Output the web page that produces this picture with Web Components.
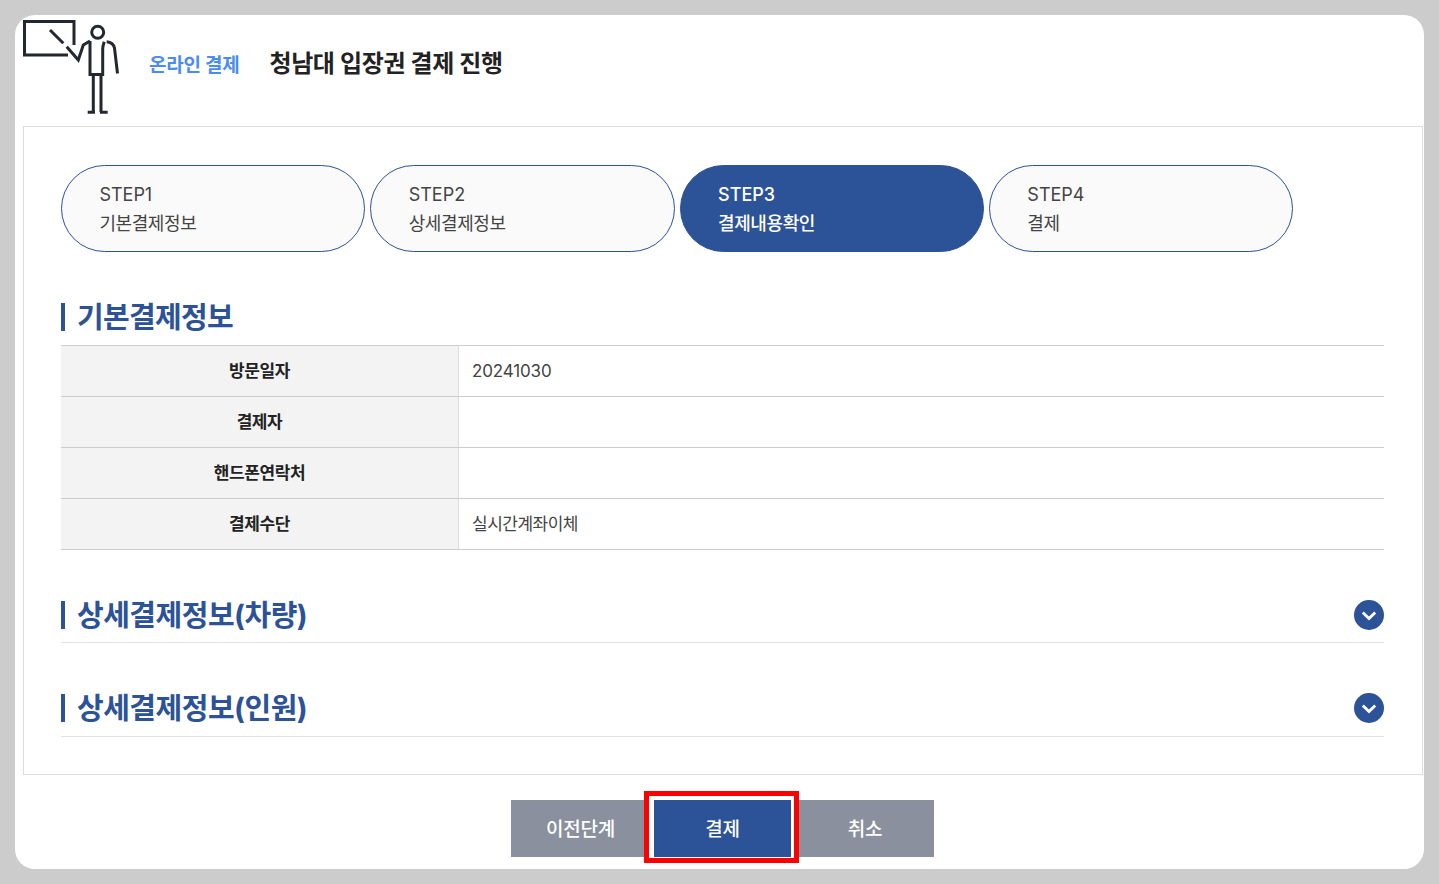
<!DOCTYPE html>
<html lang="ko">
<head>
<meta charset="utf-8">
<title>온라인 결제</title>
<style>
  html, body { margin: 0; height: 100%; }
  body {
    background: #cccccc;
    font-family: Inter, "Noto Sans CJK KR", sans-serif;
    color: #333;
    overflow: hidden;
  }
</style>
</head>
<body>
<payment-page>
  <page-header slot="header"></page-header>
  <step-nav slot="steps">
    <step-pill step="STEP1" label="기본결제정보"></step-pill>
    <step-pill step="STEP2" label="상세결제정보"></step-pill>
    <step-pill step="STEP3" label="결제내용확인" active></step-pill>
    <step-pill step="STEP4" label="결제"></step-pill>
  </step-nav>
  <section-title slot="sections">기본결제정보</section-title>
  <info-table slot="sections">
    <info-row label="방문일자">20241030</info-row>
    <info-row label="결제자"></info-row>
    <info-row label="핸드폰연락처"></info-row>
    <info-row label="결제수단" style="--value-spacing:-0.5px;--value-lift:4px">실시간계좌이체</info-row>
  </info-table>
  <fold-section slot="sections" style="margin-top:34px">상세결제정보(차량)</fold-section>
  <fold-section slot="sections" style="margin-top:34px;height:60px;padding-bottom:1px">상세결제정보(인원)</fold-section>
  <action-bar slot="actions">
    <action-button>이전단계</action-button>
    <action-button primary highlight>결제</action-button>
    <action-button>취소</action-button>
  </action-bar>
</payment-page>

<script>
class PaymentPage extends HTMLElement {
    constructor() {
        super();
        this.attachShadow({ mode: 'open' });
        this.shadowRoot.innerHTML = `
            <style>
                :host {
                    display: block;
                    position: absolute;
                    left: 15px;
                    top: 15px;
                    width: 1409px;
                    height: 854px;
                    background: #fff;
                    border-radius: 20px;
                    overflow: hidden;
                }
                .body {
                    box-sizing: border-box;
                    margin-left: 8px;
                    width: 1400px;
                    height: 649px;
                    border: 1px solid #dddddd;
                    padding: 38px 38px 0 37px;
                }
                .sections { display: block; margin-top: 40px; }
            </style>
            <slot name="header"></slot>
            <div class="body">
                <slot name="steps"></slot>
                <div class="sections"><slot name="sections"></slot></div>
            </div>
            <slot name="actions"></slot>
        `;
    }
}

class PageHeader extends HTMLElement {
    constructor() {
        super();
        this.attachShadow({ mode: 'open' });
        this.shadowRoot.innerHTML = `
            <style>
                :host {
                    display: flex;
                    align-items: flex-start;
                    height: 111px;
                    padding-left: 8px;
                    box-sizing: border-box;
                }
                svg { display: block; flex: none; margin-top: 4px; }
                .sub {
                    margin: 38px 0 0 29px;
                    font-size: 19px;
                    font-weight: 700;
                    line-height: 26px;
                    letter-spacing: -0.25px;
                    color: #4a8cf0;
                    white-space: nowrap;
                }
                .title {
                    margin: 33px 0 0 30px;
                    font-size: 24px;
                    font-weight: 700;
                    line-height: 32px;
                    letter-spacing: -0.35px;
                    color: #222;
                    white-space: nowrap;
                }
            </style>
            <svg width="97" height="96" viewBox="0 0 97 96" fill="none" stroke="#23272f" stroke-width="3">
                <path d="M45 36H1.5V2.5H51V26" />
                <path d="M27 11L40.3 24.3" />
                <path d="M43.7 27.7L55.3 41L60.3 26L67 22" />
                <circle cx="74.7" cy="13.3" r="6" />
                <path d="M67 22V55.5H79.7V30C79.7 27 80.5 25 81.3 22.7" />
                <path d="M83.7 22.7C88 23 90.5 25 91.5 29L94.5 54.5" />
                <path d="M70.3 55V93.3M78 55V93.3M64.7 93.3H72M77 93.3H84.7" />
            </svg>
            <div class="sub">온라인 결제</div>
            <div class="title">청남대 입장권 결제 진행</div>
        `;
    }
}

class StepNav extends HTMLElement {
    constructor() {
        super();
        this.attachShadow({ mode: 'open' });
        this.shadowRoot.innerHTML = `
            <style>
                :host { display: flex; gap: 5.03px; }
            </style>
            <slot></slot>
        `;
    }
}

class StepPill extends HTMLElement {
    constructor() {
        super();
        this.attachShadow({ mode: 'open' });
    }

    connectedCallback() {
        this.shadowRoot.innerHTML = `
            <style>
                :host {
                    display: block;
                    box-sizing: border-box;
                    width: 304.3px;
                    height: 87px;
                    padding: 14px 0 0 37.4px;
                    border: 1px solid #2c5297;
                    border-radius: 44px;
                    background: #fafafa;
                    color: #444;
                    font-size: 18px;
                    line-height: 30px;
                }
                :host([active]) {
                    background: #2c5297;
                    color: #fff;
                    font-weight: 500;
                }
                .label { letter-spacing: -0.4px; margin-top: -1px; }
            </style>
            <div>${this.getAttribute('step')}</div>
            <div class="label">${this.getAttribute('label')}</div>
        `;
    }
}

class SectionTitle extends HTMLElement {
    constructor() {
        super();
        this.attachShadow({ mode: 'open' });
        this.shadowRoot.innerHTML = `
            <style>
                :host {
                    display: flex;
                    align-items: center;
                    height: 53px;
                    padding-bottom: 5px;
                    box-sizing: border-box;
                    font-size: 29px;
                    font-weight: 700;
                    letter-spacing: -0.7px;
                    color: #2c5297;
                }
                .bar {
                    width: 4px;
                    height: 28px;
                    margin: 2px 12px 0 0;
                    background: #2c5297;
                    flex: none;
                }
                .text { padding-bottom: 2px; }
            </style>
            <span class="bar"></span><span class="text"><slot></slot></span>
        `;
    }
}

class InfoTable extends HTMLElement {
    constructor() {
        super();
        this.attachShadow({ mode: 'open' });
        this.shadowRoot.innerHTML = `
            <style>
                :host {
                    display: block;
                    border-top: 1px solid #cccccc;
                }
            </style>
            <slot></slot>
        `;
    }
}

class InfoRow extends HTMLElement {
    constructor() {
        super();
        this.attachShadow({ mode: 'open' });
    }

    connectedCallback() {
        this.shadowRoot.innerHTML = `
            <style>
                :host {
                    display: grid;
                    grid-template-columns: 398px 1fr;
                    height: 51px;
                    box-sizing: border-box;
                    border-bottom: 1px solid #cccccc;
                    font-size: 17px;
                }
                .label {
                    display: flex;
                    align-items: center;
                    justify-content: center;
                    box-sizing: border-box;
                    padding-bottom: 4px;
                    background: #f3f3f3;
                    border-right: 1px solid #dddddd;
                    font-weight: 700;
                    letter-spacing: -0.4px;
                    color: #222;
                }
                .value {
                    display: flex;
                    align-items: center;
                    box-sizing: border-box;
                    padding: 0 0 var(--value-lift, 0) 13px;
                    letter-spacing: var(--value-spacing, -0.15px);
                    color: #444;
                }
            </style>
            <div class="label">${this.getAttribute('label')}</div>
            <div class="value"><slot></slot></div>
        `;
    }
}

class FoldSection extends HTMLElement {
    constructor() {
        super();
        this.attachShadow({ mode: 'open' });
        this.shadowRoot.innerHTML = `
            <style>
                :host {
                    display: flex;
                    align-items: center;
                    justify-content: space-between;
                    height: 59px;
                    box-sizing: border-box;
                    border-bottom: 1px solid #e2e2e2;
                    font-size: 29px;
                    font-weight: 700;
                    letter-spacing: -0.5px;
                    color: #2c5297;
                }
                .name { display: flex; align-items: center; }
                .bar {
                    width: 4px;
                    height: 28px;
                    margin: 4px 12px 0 0;
                    background: #2c5297;
                    flex: none;
                }
                svg { display: block; flex: none; margin-top: 4px; }
            </style>
            <div class="name"><span class="bar"></span><slot></slot></div>
            <svg width="30" height="30" viewBox="0 0 30 30">
                <circle cx="15" cy="15" r="15" fill="#2c5297" />
                <path d="M8.8 12.4L15 18.6L21.2 12.4" fill="none" stroke="#fff" stroke-width="2.8" />
            </svg>
        `;
    }
}

class ActionBar extends HTMLElement {
    constructor() {
        super();
        this.attachShadow({ mode: 'open' });
        this.shadowRoot.innerHTML = `
            <style>
                :host {
                    display: flex;
                    justify-content: center;
                    padding-top: 25px;
                    margin-left: 6px;
                }
            </style>
            <slot></slot>
        `;
    }
}

class ActionButton extends HTMLElement {
    constructor() {
        super();
        this.attachShadow({ mode: 'open' });
        this.shadowRoot.innerHTML = `
            <style>
                :host {
                    display: block;
                    position: relative;
                    flex: none;
                    width: 139px;
                    height: 57px;
                    color: #fff;
                    font-size: 19px;
                    font-weight: 500;
                    letter-spacing: -0.2px;
                }
                :host(:last-child) { width: 138px; }
                :host([highlight]) {
                    width: 137px;
                    margin: 0 5px 0 4px;
                    z-index: 1;
                }
                .face {
                    position: relative;
                    display: flex;
                    align-items: center;
                    justify-content: center;
                    box-sizing: border-box;
                    height: 100%;
                    padding-bottom: 3px;
                    background: #8a909e;
                }
                :host([primary]) .face { background: #2c5297; }
                .mark {
                    display: none;
                    position: absolute;
                    left: -10.5px;
                    top: -9px;
                    box-sizing: border-box;
                    width: 155px;
                    height: 72px;
                    border: 5px solid #ff0000;
                    background: #fff;
                }
                :host([highlight]) .mark { display: block; }
            </style>
            <span class="mark"></span>
            <div class="face"><slot></slot></div>
        `;
    }
}

customElements.define('payment-page', PaymentPage);
customElements.define('page-header', PageHeader);
customElements.define('step-nav', StepNav);
customElements.define('step-pill', StepPill);
customElements.define('section-title', SectionTitle);
customElements.define('info-table', InfoTable);
customElements.define('info-row', InfoRow);
customElements.define('fold-section', FoldSection);
customElements.define('action-bar', ActionBar);
customElements.define('action-button', ActionButton);
</script>
</body>
</html>
